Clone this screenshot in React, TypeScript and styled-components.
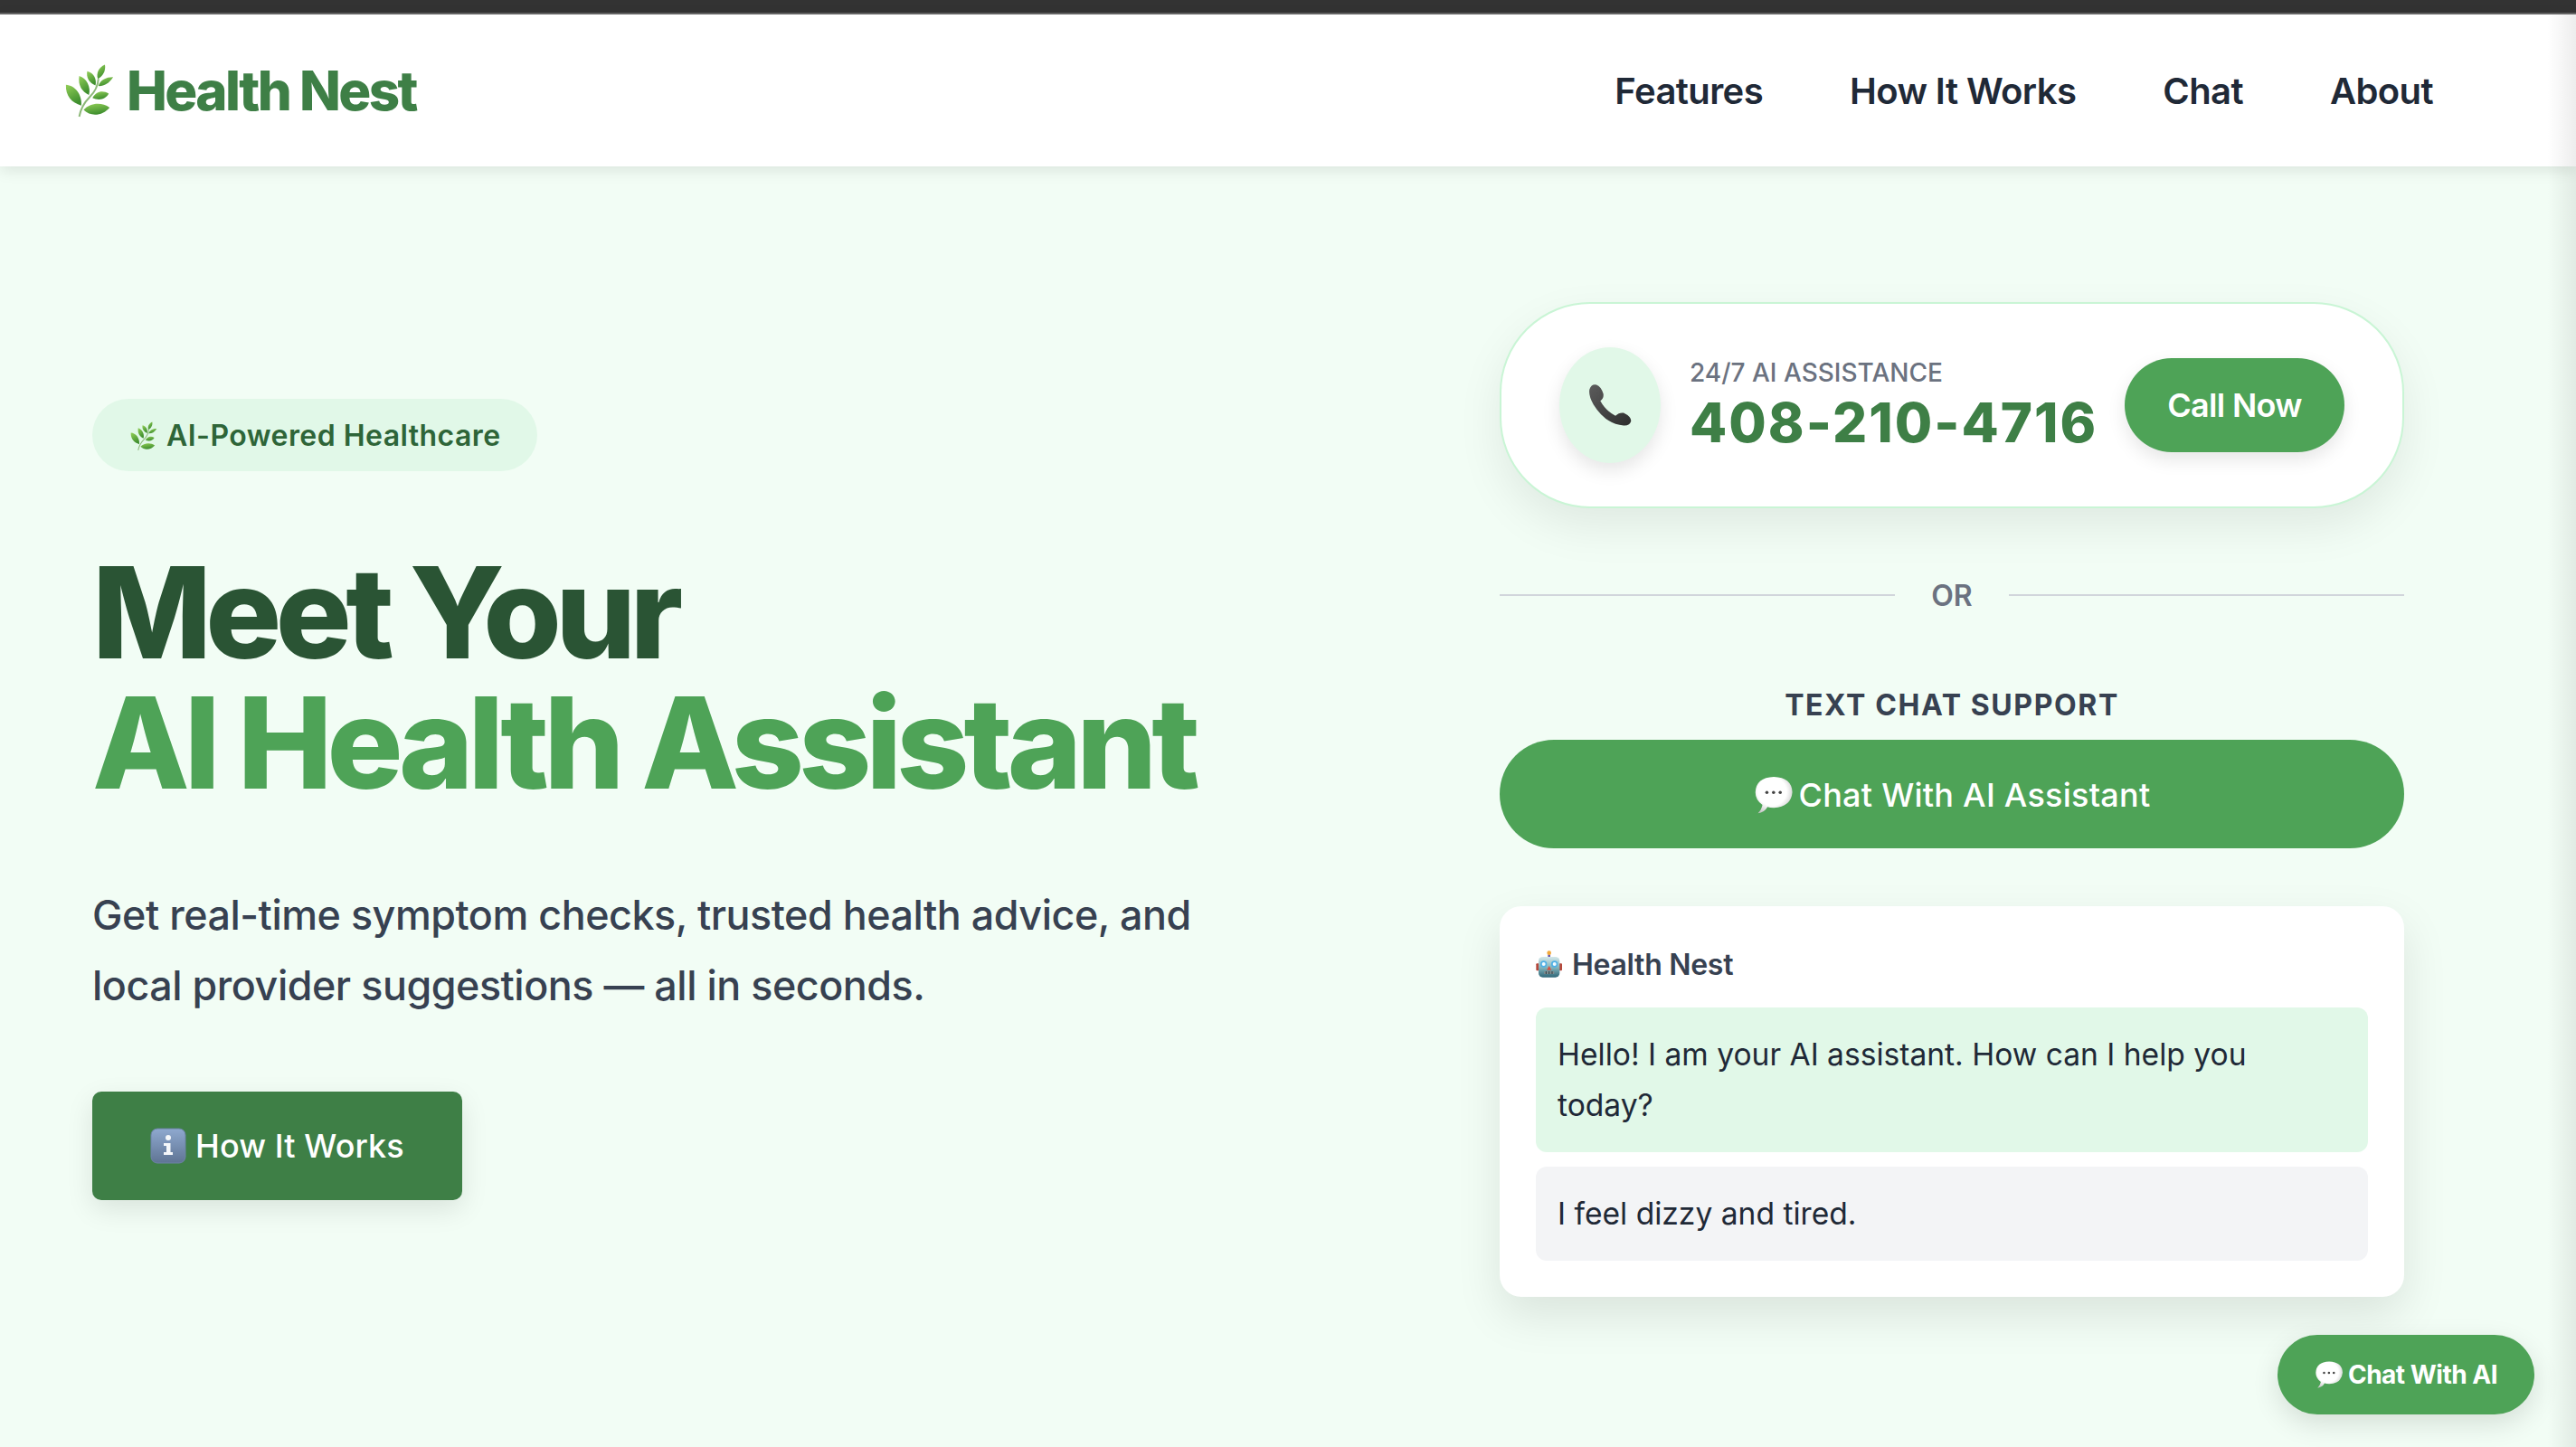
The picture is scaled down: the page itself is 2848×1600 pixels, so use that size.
import styled, { createGlobalStyle } from "styled-components";

const GlobalStyle = createGlobalStyle`
  html, body {
    margin: 0;
    padding: 0;
    height: 1600px;
    overflow: hidden;
    background: #f2fdf5;
    font-family: Inter, "Liberation Sans", sans-serif;
  }
  * {
    box-sizing: border-box;
  }
`;

const Sprig = ({ size }: { size: number }) => (
  <svg width={size} height={size} viewBox="60 52 180 190">
    <defs>
      <linearGradient id="leaf" x1="0" y1="0" x2="0.4" y2="1">
        <stop offset="0" stopColor="#93cf58" />
        <stop offset="1" stopColor="#3f8f2f" />
      </linearGradient>
    </defs>
    <path d="M115 236Q122 198 150 170T180 108" fill="none" stroke="#8cb878" strokeWidth="6" />
    <path d="M130 213C150 190 190 185 218 205C195 232 155 238 130 213Z" fill="url(#leaf)" />
    <path d="M70 128C100 130 125 160 122 198C90 190 68 165 70 128Z" fill="url(#leaf)" />
    <path d="M115 98C140 105 155 135 148 162C125 152 110 130 115 98Z" fill="url(#leaf)" />
    <path d="M142 82C165 88 175 110 170 130C150 122 138 105 142 82Z" fill="url(#leaf)" />
    <path d="M202 60C206 80 195 100 178 108C172 90 180 70 202 60Z" fill="url(#leaf)" />
    <path d="M230 102C215 125 198 133 180 132C186 112 205 102 230 102Z" fill="url(#leaf)" />
    <path d="M215 158C205 178 180 182 160 172C172 150 195 145 215 158Z" fill="url(#leaf)" />
  </svg>
);

const Handset = () => (
  <svg width="50" height="50" viewBox="165 130 150 145">
    <defs>
      <linearGradient id="handset" x1="0" y1="0" x2="1" y2="1">
        <stop offset="0" stopColor="#5c5c5c" />
        <stop offset="1" stopColor="#2e2e2e" />
      </linearGradient>
    </defs>
    <path
      d="M172 150Q178 132 195 135Q210 140 218 165Q220 180 208 188Q225 220 258 238Q270 226 285 228Q310 240 310 255Q305 272 285 270Q225 265 185 200Q168 170 172 150Z"
      fill="url(#handset)"
    />
  </svg>
);

const Balloon = ({ size }: { size: number }) => (
  <svg width={size} height={size} viewBox="115 52 125 125">
    <defs>
      <radialGradient id="balloon" cx="0.45" cy="0.4" r="0.65">
        <stop offset="0.6" stopColor="#ffffff" />
        <stop offset="1" stopColor="#c4c4c4" />
      </radialGradient>
    </defs>
    <path d="M128 172Q140 160 142 146Q120 130 120 106Q122 60 178 58Q234 60 236 106Q232 152 178 155Q165 155 158 152Q148 170 128 172Z" fill="url(#balloon)" />
    <circle cx="156" cy="107" r="5" fill="#444" />
    <circle cx="177" cy="107" r="5" fill="#444" />
    <circle cx="198" cy="107" r="5" fill="#444" />
  </svg>
);

const Robot = () => (
  <svg width="30" height="34" viewBox="58 26 90 96">
    <defs>
      <linearGradient id="robot" x1="0" y1="0" x2="0" y2="1">
        <stop offset="0" stopColor="#d3e8ea" />
        <stop offset="0.55" stopColor="#7fb0b8" />
        <stop offset="1" stopColor="#2d6577" />
      </linearGradient>
    </defs>
    <rect x="98" y="42" width="8" height="10" fill="#6a5aa8" />
    <circle cx="102" cy="37" r="7" fill="#f2a93b" />
    <rect x="59" y="72" width="10" height="24" rx="3" fill="#b5473a" />
    <rect x="135" y="72" width="10" height="24" rx="3" fill="#b5473a" />
    <rect x="67" y="50" width="70" height="68" rx="14" fill="url(#robot)" />
    <circle cx="84" cy="74" r="11" fill="#4fb0e6" />
    <circle cx="84" cy="74" r="6" fill="#f2fbff" />
    <circle cx="120" cy="74" r="11" fill="#4fb0e6" />
    <circle cx="120" cy="74" r="6" fill="#f2fbff" />
    <path d="M102 80L94 94H110Z" fill="#d8503f" />
    <rect x="85" y="98" width="34" height="9" rx="2" fill="#7d8b8e" />
    <path d="M92 98v9M102 98v9M112 98v9" stroke="#2f3d42" strokeWidth="3" />
  </svg>
);

const InfoBox = () => (
  <svg width="40" height="40" viewBox="0 0 40 40">
    <defs>
      <linearGradient id="info" x1="0" y1="0" x2="0" y2="1">
        <stop offset="0" stopColor="#8fa9cf" />
        <stop offset="1" stopColor="#5f7494" />
      </linearGradient>
    </defs>
    <rect x="1" y="1" width="38" height="38" rx="7" fill="url(#info)" stroke="#6d83a6" strokeWidth="1" />
    <circle cx="20" cy="11" r="3" fill="#f5f7fa" />
    <path d="M15 17H22.500V27H25V30H15V27H18V20H15Z" fill="#f5f7fa" />
  </svg>
);

const Page = styled.div`
  height: 1600px;
  display: flex;
  flex-direction: column;
  overflow: hidden;
  position: relative;
  background: #f2fdf5;
`;

const EdgeShade = styled.div`
  position: absolute;
  top: 16px;
  right: 0;
  bottom: 0;
  width: 32px;
  background: linear-gradient(to right, rgba(0, 0, 0, 0), rgba(0, 0, 0, 0.07));
  pointer-events: none;
  z-index: 5;
`;

const WindowStrip = styled.div`
  height: 16px;
  flex: none;
  background: #333333;
  border-bottom: 2px solid #666666;
`;

const Nav = styled.nav`
  height: 168px;
  flex: none;
  display: flex;
  align-items: center;
  justify-content: space-between;
  padding: 0 158px 0 68px;
  background: #ffffff;
  box-shadow: 0 4px 16px rgba(0, 0, 0, 0.1);
  position: relative;
  z-index: 2;
`;

const Brand = styled.div`
  display: flex;
  align-items: center;
  gap: 10px;
  font-size: 60px;
  font-weight: 800;
  letter-spacing: -2.6px;
  color: #3e7f46;
`;

const NavLinks = styled.div`
  display: flex;
  gap: 96px;
`;

const NavLink = styled.a`
  font-size: 40px;
  font-weight: 600;
  letter-spacing: -0.6px;
  color: #1f2937;
`;

const Hero = styled.main`
  flex: 1;
  display: grid;
  grid-template-columns: 1fr 1000px;
  align-items: center;
  padding: 150px 190px 166px 102px;
`;

const HeroCopy = styled.section`
  display: flex;
  flex-direction: column;
  align-items: flex-start;
`;

const Pill = styled.div`
  display: flex;
  align-items: center;
  gap: 8px;
  padding: 17px 40px 15px;
  border-radius: 40px;
  background: #e1f8e8;
  color: #2e6538;
  font-size: 32px;
  line-height: 48px;
  font-weight: 600;
  letter-spacing: 0.45px;
`;

const Title = styled.h1`
  margin: 84px 0 0;
  font-size: 140px;
  line-height: 144px;
  font-weight: 800;
  letter-spacing: -6.7px;
  color: #2a5434;
`;

const TitleAccent = styled.span`
  display: block;
  letter-spacing: -5.9px;
  color: #4ea357;
`;

const Lead = styled.p`
  margin: 80px 0 0;
  font-size: 44.8px;
  line-height: 78px;
  font-weight: 500;
  letter-spacing: -0.45px;
  color: #374151;
  width: 1240px;
`;

const GuideButton = styled.button`
  margin-top: 78px;
  height: 120px;
  padding: 0 64px;
  display: flex;
  align-items: center;
  gap: 10px;
  border: none;
  border-radius: 10px;
  background: #3e7f46;
  box-shadow: 0 10px 30px rgba(0, 0, 0, 0.1);
  color: #ffffff;
  font-family: inherit;
  font-size: 36px;
  font-weight: 500;
  letter-spacing: 0.1px;
`;

const Side = styled.section`
  display: flex;
  flex-direction: column;
`;

const CallCard = styled.div`
  height: 228px;
  display: flex;
  align-items: center;
  padding: 0 64px;
  background: #ffffff;
  border: 2px solid #c9f5d5;
  border-radius: 100px;
  box-shadow: 0 20px 50px rgba(0, 0, 0, 0.08);
`;

const CallIcon = styled.div`
  width: 112px;
  height: 128px;
  flex: none;
  display: flex;
  align-items: center;
  justify-content: center;
  border-radius: 50%;
  background: #e1f8e8;
  box-shadow: 0 8px 20px rgba(0, 0, 0, 0.1);
`;

const CallText = styled.div`
  flex: 1;
  margin-left: 32px;
`;

const CallCaption = styled.div`
  font-size: 28px;
  line-height: 34px;
  font-weight: 500;
  color: #6b7280;
`;

const CallNumber = styled.div`
  margin-top: 4px;
  font-size: 60px;
  line-height: 68px;
  font-weight: 800;
  letter-spacing: 2px;
  color: #3e7f46;
`;

const CallButton = styled.button`
  width: 243px;
  height: 104px;
  flex: none;
  border: none;
  border-radius: 52px;
  background: #4ea357;
  box-shadow: 0 8px 20px rgba(0, 0, 0, 0.1);
  color: #ffffff;
  font-family: inherit;
  font-size: 36px;
  font-weight: 600;
  letter-spacing: -0.7px;
`;

const Divider = styled.div`
  margin-top: 76px;
  height: 40px;
  display: flex;
  align-items: center;
  gap: 40px;
  font-size: 32px;
  font-weight: 600;
  color: #6b7280;

  &::before,
  &::after {
    content: "";
    flex: 1;
    height: 2px;
    background: #d1d5db;
  }
`;

const ChatLabel = styled.div`
  margin-top: 78px;
  height: 48px;
  text-align: center;
  font-size: 32px;
  line-height: 48px;
  font-weight: 700;
  letter-spacing: 1.6px;
  color: #374151;
`;

const ChatButton = styled.button`
  margin-top: 14px;
  height: 120px;
  padding-top: 2px;
  display: flex;
  align-items: center;
  justify-content: center;
  gap: 6px;
  border: none;
  border-radius: 60px;
  background: #4ea357;
  color: #ffffff;
  font-family: inherit;
  font-size: 36px;
  font-weight: 500;
  letter-spacing: 0.25px;
`;

const ChatCard = styled.div`
  margin-top: 64px;
  padding: 40px;
  display: flex;
  flex-direction: column;
  gap: 16px;
  background: #ffffff;
  border-radius: 24px;
  box-shadow: 0 20px 50px rgba(0, 0, 0, 0.1);
`;

const ChatHeader = styled.div`
  height: 56px;
  padding-bottom: 8px;
  display: flex;
  align-items: center;
  gap: 10px;
  font-size: 32px;
  font-weight: 600;
  letter-spacing: -0.3px;
  color: #374151;
`;

const Bubble = styled.div<{ $bot?: boolean }>`
  padding: 24px;
  border-radius: 12px;
  background: ${({ $bot }) => ($bot ? "#e1f8e8" : "#f3f4f6")};
  color: #1f2937;
  font-size: 33.6px;
  line-height: 56px;
`;

const FloatingChat = styled.button`
  position: absolute;
  right: 46px;
  bottom: 36px;
  width: 284px;
  height: 88px;
  display: flex;
  align-items: center;
  justify-content: center;
  gap: 5px;
  border: none;
  border-radius: 44px;
  background: #4ea357;
  box-shadow: 0 10px 30px rgba(0, 0, 0, 0.12);
  color: #ffffff;
  font-family: inherit;
  font-size: 28px;
  font-weight: 700;
  letter-spacing: -0.5px;
  z-index: 6;
`;

const App = () => {
  return (
    <Page>
      <GlobalStyle />
      <WindowStrip />
      <Nav>
        <Brand>
          <Sprig size={62} />
          Health Nest
        </Brand>
        <NavLinks>
          <NavLink>Features</NavLink>
          <NavLink>How It Works</NavLink>
          <NavLink>Chat</NavLink>
          <NavLink>About</NavLink>
        </NavLinks>
      </Nav>
      <Hero>
        <HeroCopy>
          <Pill>
            <Sprig size={34} />
            AI-Powered Healthcare
          </Pill>
          <Title>
            Meet Your
            <TitleAccent>AI Health Assistant</TitleAccent>
          </Title>
          <Lead>
            Get real-time symptom checks, trusted health advice, and local provider suggestions — all in seconds.
          </Lead>
          <GuideButton>
            <InfoBox />
            How It Works
          </GuideButton>
        </HeroCopy>
        <Side>
          <CallCard>
            <CallIcon>
              <Handset />
            </CallIcon>
            <CallText>
              <CallCaption>24/7 AI ASSISTANCE</CallCaption>
              <CallNumber>408-210-4716</CallNumber>
            </CallText>
            <CallButton>Call Now</CallButton>
          </CallCard>
          <Divider>OR</Divider>
          <ChatLabel>TEXT CHAT SUPPORT</ChatLabel>
          <ChatButton>
            <Balloon size={44} />
            Chat With AI Assistant
          </ChatButton>
          <ChatCard>
            <ChatHeader>
              <Robot />
              Health Nest
            </ChatHeader>
            <Bubble $bot>Hello! I am your AI assistant. How can I help you today?</Bubble>
            <Bubble>I feel dizzy and tired.</Bubble>
          </ChatCard>
        </Side>
      </Hero>
      <FloatingChat>
        <Balloon size={32} />
        Chat With AI
      </FloatingChat>
      <EdgeShade />
    </Page>
  );
};

export default App;
